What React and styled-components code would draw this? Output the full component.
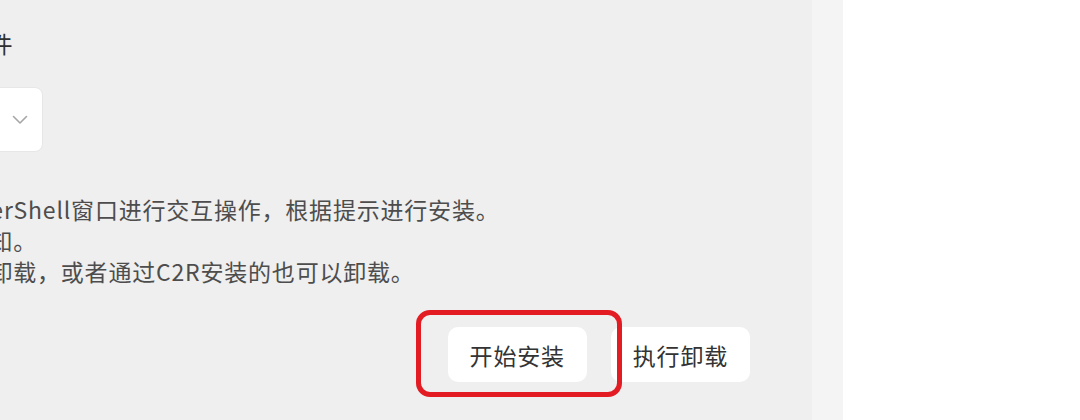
import styled, { createGlobalStyle } from 'styled-components';

const GlobalStyle = createGlobalStyle`
  html, body {
    margin: 0;
    padding: 0;
    background: #fff;
    overflow: hidden;
  }
  body {
    font-family: "Noto Sans CJK SC", "Noto Sans", sans-serif;
  }
`;

//Styles
const Screen = styled.div`
  display: flex;
  width: 1080px;
  height: 420px;
  overflow: hidden;
`;

const Panel = styled.div`
  width: 812px;
  flex: none;
  height: 100%;
  background-color: #efefef;
  overflow: hidden;
`;

const Track = styled.div`
  width: 31px;
  flex: none;
  background-color: #f4f4f4;
`;

const Content = styled.div`
  margin-left: -201px;
  padding: 28px 62px 0 0;
  display: flex;
  flex-direction: column;
  font-size: 23px;
  letter-spacing: 0.8px;
  line-height: 31px;
`;

const Label = styled.div`
  color: #2f2f2f;
  white-space: nowrap;
`;

const Select = styled.div`
  margin-top: 28px;
  width: 244px;
  height: 65px;
  box-sizing: border-box;
  background-color: #fff;
  border: 1px solid #e7e7e7;
  border-radius: 8px;
  display: flex;
  align-items: center;
  justify-content: flex-end;
  padding-right: 14px;
  color: #a6a6a6;
`;

const Notes = styled.div`
  margin-top: 42px;
  color: #4d4d4d;
  white-space: nowrap;
`;

const Actions = styled.div`
  margin-top: 40px;
  display: flex;
  justify-content: flex-end;
  gap: 24px;
`;

const Highlight = styled.div`
  position: relative;
  display: flex;

  &::after {
    content: '';
    position: absolute;
    left: -32px;
    right: -35px;
    top: -17px;
    bottom: -15px;
    border: 5px solid #e31b23;
    border-radius: 14px;
    pointer-events: none;
  }
`;

const Button = styled.button`
  height: 55px;
  padding: 0 22px;
  border: none;
  border-radius: 10px;
  background-color: #fff;
  color: #333;
  font-family: inherit;
  font-size: 23px;
  letter-spacing: 0.8px;
  cursor: pointer;
`;

const Chevron = () => (
  <svg width="16" height="10" viewBox="0 0 16 10" fill="none">
    <path d="M1.5 1.5 L8 8 L14.5 1.5" stroke="currentColor" strokeWidth="1.6" strokeLinecap="round" strokeLinejoin="round" />
  </svg>
);

const App = () => {
  return (
    <>
      <GlobalStyle />
      <Screen>
        <Panel>
          <Content>
            <Label>选择需要安装的组件</Label>
            <Select>
              <Chevron />
            </Select>
            <Notes>
              <div>安装时将弹出PowerShell窗口进行交互操作，根据提示进行安装。</div>
              <div>安装成功后弹出通知。</div>
              <div>支持本工具安装的卸载，或者通过C2R安装的也可以卸载。</div>
            </Notes>
            <Actions>
              <Highlight>
                <Button>开始安装</Button>
              </Highlight>
              <Button>执行卸载</Button>
            </Actions>
          </Content>
        </Panel>
        <Track />
      </Screen>
    </>
  );
};

export default App;
